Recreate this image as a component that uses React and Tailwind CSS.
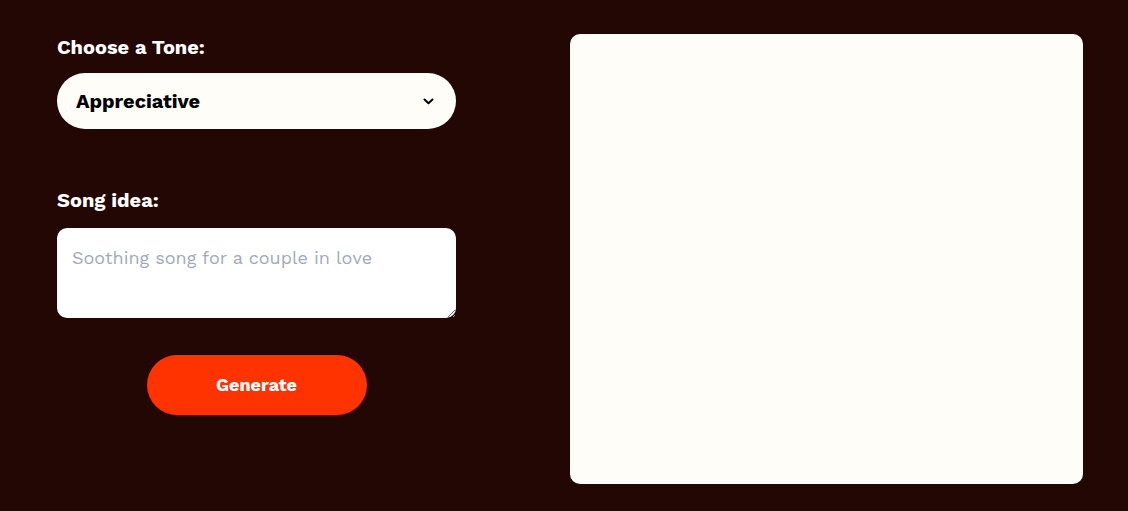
import React from "react";

export default function App() {
  return (
    <div
      className="w-[1128px] h-[511px] bg-[#220704] flex gap-[114px] pl-[57px] pt-[34px]"
      style={{ fontFamily: "'Work Sans', Inter, 'Liberation Sans', sans-serif" }}
    >
      <div className="w-[399px] flex flex-col">
        <label className="text-white font-bold text-[20px] leading-[26px]">Choose a Tone:</label>
        <div className="relative mt-[13px]">
          <select
            defaultValue="Appreciative"
            className="appearance-none w-full h-[56px] rounded-full bg-[#fffdf8] text-black font-bold text-[20px] pl-[19px] outline-none"
          >
            <option>Appreciative</option>
            <option>Romantic</option>
            <option>Happy</option>
          </select>
          <svg
            className="absolute left-[366px] top-[25px] pointer-events-none"
            width="11"
            height="7"
            viewBox="0 0 11 7"
            fill="none"
          >
            <path d="M1.5 1.5L5.5 5.2L9.5 1.5" stroke="#000" strokeWidth="2" strokeLinecap="round" strokeLinejoin="round" />
          </svg>
        </div>
        <label className="text-white font-bold text-[20px] leading-[26px] mt-[58px]">Song idea:</label>
        <textarea
          placeholder="Soothing song for a couple in love"
          className="mt-[15px] h-[90px] w-full rounded-[10px] bg-white px-[15px] pt-[18px] pb-[16px] text-[18px] leading-[24px] text-black placeholder:text-[#a0aab8] outline-none"
        />
        <div className="flex justify-center mt-[37px]">
          <button className="w-[220px] h-[60px] pb-[2px] rounded-full bg-[#ff3300] text-white font-bold text-[18px]">
            Generate
          </button>
        </div>
      </div>
      <div className="w-[513px] h-[450px] bg-[#fffdf8] rounded-[10px]" />
    </div>
  );
}
